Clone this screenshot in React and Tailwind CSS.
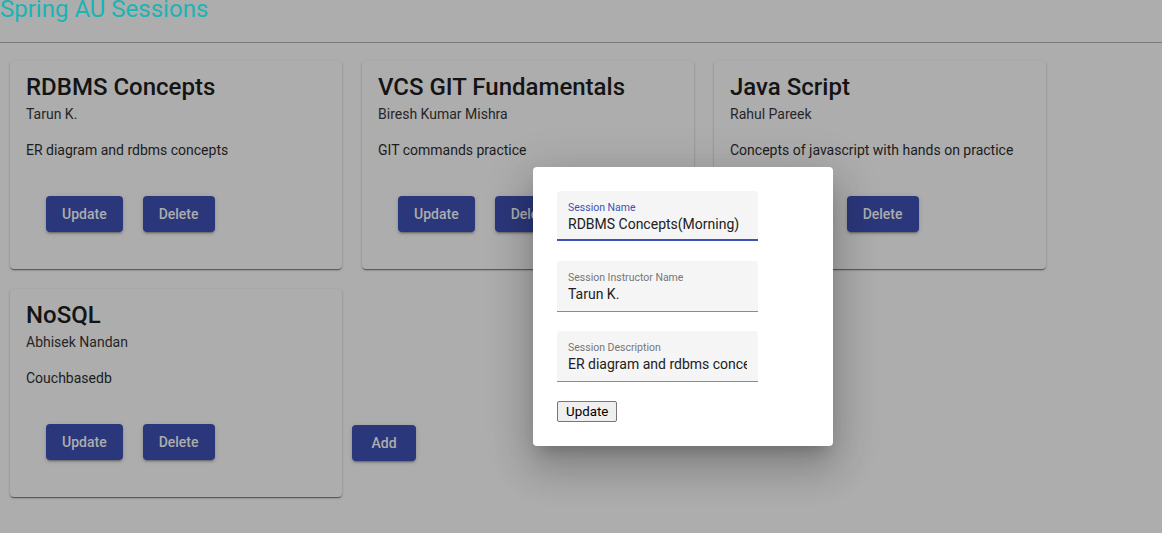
const sessions = [
  { name: 'RDBMS Concepts', instructor: 'Tarun K.', description: 'ER diagram and rdbms concepts' },
  { name: 'VCS GIT Fundamentals', instructor: 'Biresh Kumar Mishra', description: 'GIT commands practice' },
  { name: 'Java Script', instructor: 'Rahul Pareek', description: 'Concepts of javascript with hands on practice' },
  { name: 'NoSQL', instructor: 'Abhisek Nandan', description: 'Couchbasedb' },
]

const btn =
  'h-9 min-w-16 rounded-[4px] bg-[#2b377b] px-4 text-[14px] font-medium leading-9 text-[#adadad] shadow-[0_3px_1px_-2px_rgba(0,0,0,0.2),0_2px_2px_0_rgba(0,0,0,0.14),0_1px_5px_0_rgba(0,0,0,0.12)]'

function SessionCard({ session }) {
  return (
    <div className="m-[10px] h-[208px] w-[332px] rounded-[4px] bg-[#adadad] p-4 shadow-[0_2px_1px_-1px_rgba(0,0,0,0.3),0_1px_1px_0_rgba(0,0,0,0.2),0_1px_3px_0_rgba(0,0,0,0.18)]">
      <h2 className="mb-[7px] text-[24px] font-medium leading-[20px] text-[#141414]">{session.name}</h2>
      <div className="mb-4 text-[14px] leading-5 text-[#262626]">{session.instructor}</div>
      <p className="text-[14px] leading-5 text-[#1c1c1c]">{session.description}</p>
      <div className="mt-9 flex gap-5 pl-5">
        <button type="button" className={btn}>Update</button>
        <button type="button" className={btn}>Delete</button>
      </div>
    </div>
  )
}

function Field({ label, value, focused }) {
  return (
    <div
      className={
        focused
          ? 'mb-5 h-[50px] w-[201px] rounded-t-[4px] border-b-2 border-[#3f51b5] bg-[#f5f5f5] px-[11px] pt-[11px]'
          : 'mb-[19px] h-[51px] w-[201px] rounded-t-[4px] border-b border-[#8c8c8c] bg-[#f5f5f5] px-[11px] pt-[11px]'
      }
    >
      <div className={focused ? 'text-[10.5px] leading-3 text-[#3f51b5]' : 'text-[10.5px] leading-3 text-[#757575]'}>
        {label}
      </div>
      <input
        readOnly
        value={value}
        className="mt-px block h-[18px] w-full bg-transparent text-[14px] leading-[18px] text-[#212121] outline-none"
      />
    </div>
  )
}

export default function App() {
  return (
    <div className="relative h-[533px] overflow-hidden bg-[#adadad] font-['Roboto',sans-serif]">
      <h1 className="-mt-[7px] text-[24px] font-normal leading-8 text-[#1bb4b4]">Spring AU Sessions</h1>
      <div className="mt-[17px] border-t border-[#7b7b7b]" />
      <div className="flex flex-wrap pt-2">
        {sessions.map((s) => (
          <SessionCard key={s.name} session={s} />
        ))}
        <button type="button" className={`${btn} mt-[146px] self-start`}>Add</button>
      </div>

      <div className="absolute left-[533px] top-[167px] w-[300px] rounded-[4px] bg-white p-6 shadow-[0_11px_15px_-7px_rgba(0,0,0,0.2),0_24px_38px_3px_rgba(0,0,0,0.14),0_9px_46px_8px_rgba(0,0,0,0.12)]">
        <Field label="Session Name" value="RDBMS Concepts(Morning)" focused />
        <Field label="Session Instructor Name" value="Tarun K." />
        <Field label="Session Description" value="ER diagram and rdbms concepts" />
        <button
          type="button"
          className="block rounded-[2px] border border-[#767676] bg-[#efefef] px-2 py-px text-[13.33px] leading-[17px] text-black"
        >
          Update
        </button>
      </div>
    </div>
  )
}
